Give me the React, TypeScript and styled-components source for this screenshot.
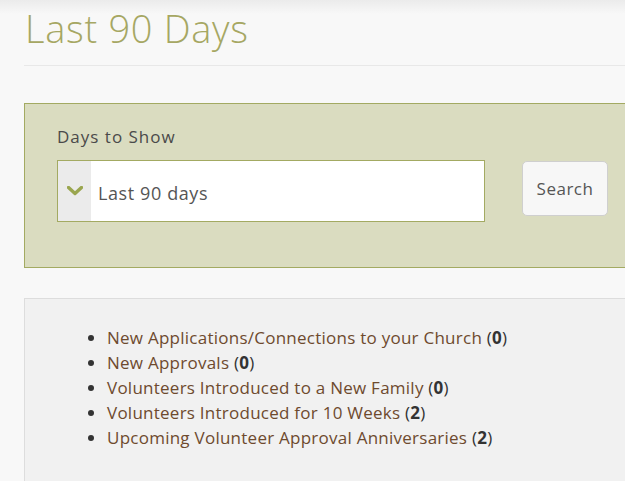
import React from 'react';
import styled, { createGlobalStyle } from 'styled-components';

const GlobalStyle = createGlobalStyle`
  html, body {
    margin: 0;
    padding: 0;
  }
  body {
    background: linear-gradient(#ebebeb 0, #f8f8f8 14px) #f8f8f8;
    font-family: 'Open Sans', 'Liberation Sans', sans-serif;
    color: #444;
    overflow: hidden;
  }
`;

const reports = [
  { label: 'New Applications/Connections to your Church', count: 0 },
  { label: 'New Approvals', count: 0 },
  { label: 'Volunteers Introduced to a New Family', count: 0 },
  { label: 'Volunteers Introduced for 10 Weeks', count: 2 },
  { label: 'Upcoming Volunteer Approval Anniversaries', count: 2 },
];

const App = () => {
  return (
    <>
      <GlobalStyle />
      <Page>
        <Title>Last 90 Days</Title>
        <Divider />
        <FilterPanel>
          <FieldLabel>Days to Show</FieldLabel>
          <FilterRow>
            <SelectGroup>
              <Addon>
                <svg width="16" height="10" viewBox="0 0 16 10">
                  <path d="M1.5 1.5 L8 7.5 L14.5 1.5" fill="none" stroke="#9aa64f" strokeWidth="3.4" strokeLinecap="round" strokeLinejoin="round" />
                </svg>
              </Addon>
              <SelectValue>Last 90 days</SelectValue>
            </SelectGroup>
            <SearchButton>Search</SearchButton>
          </FilterRow>
        </FilterPanel>
        <ResultsPanel>
          <ReportList>
            {reports.map((r) => (
              <ReportItem key={r.label}>
                <ReportLink href="#">{r.label}</ReportLink> (<strong>{r.count}</strong>)
              </ReportItem>
            ))}
          </ReportList>
        </ResultsPanel>
      </Page>
    </>
  );
};

export default App;

const Page = styled.div`
  padding: 0 0 0 24px;
  height: 481px;
  box-sizing: border-box;
  overflow: hidden;
`;

const Title = styled.h1`
  margin: 0;
  padding: 6px 0 0 1px;
  font-size: 38px;
  line-height: 44px;
  font-weight: 300;
  color: #a6a763;
  letter-spacing: 0.7px;
`;

const Divider = styled.div`
  margin-top: 15px;
  height: 1px;
  background: #e8e8e8;
`;

const FilterPanel = styled.section`
  margin-top: 37px;
  height: 165px;
  box-sizing: border-box;
  background: #dadcc0;
  border: 1px solid #a3aa62;
  border-right: none;
  padding: 21px 0 0 32px;
`;

const FieldLabel = styled.div`
  font-size: 17px;
  line-height: 24px;
  letter-spacing: 1px;
  color: #4a4a4a;
`;

const FilterRow = styled.div`
  margin-top: 11px;
  display: flex;
  align-items: flex-start;
  gap: 37px;
`;

const SelectGroup = styled.div`
  width: 428px;
  height: 62px;
  box-sizing: border-box;
  display: flex;
  border: 1px solid #a3aa62;
  background: #fff;
`;

const Addon = styled.div`
  width: 33px;
  background: #ebebeb;
  display: flex;
  align-items: center;
  justify-content: center;
`;

const SelectValue = styled.div`
  display: flex;
  align-items: center;
  padding: 3px 0 0 7px;
  font-size: 18px;
  letter-spacing: 0.6px;
  color: #555;
`;

const SearchButton = styled.button`
  margin-top: 1px;
  width: 86px;
  height: 55px;
  padding: 0;
  background: #f7f7f7;
  border: 1px solid #cfcfcf;
  border-radius: 5px;
  font-family: inherit;
  font-size: 17px;
  letter-spacing: 0.5px;
  color: #555;
`;

const ResultsPanel = styled.section`
  margin-top: 30px;
  height: 200px;
  background: #f1f1f1;
  border: 1px solid #dddddd;
  border-right: none;
  padding: 26px 0 0 0;
`;

const ReportList = styled.ul`
  margin: 0;
  padding-left: 82px;
`;

const ReportItem = styled.li`
  font-size: 17px;
  line-height: 25px;
  letter-spacing: 0.25px;
  color: #333;
  strong {
    font-weight: 700;
  }
`;

const ReportLink = styled.a`
  color: #6e4a2e;
  text-decoration: none;
`;
